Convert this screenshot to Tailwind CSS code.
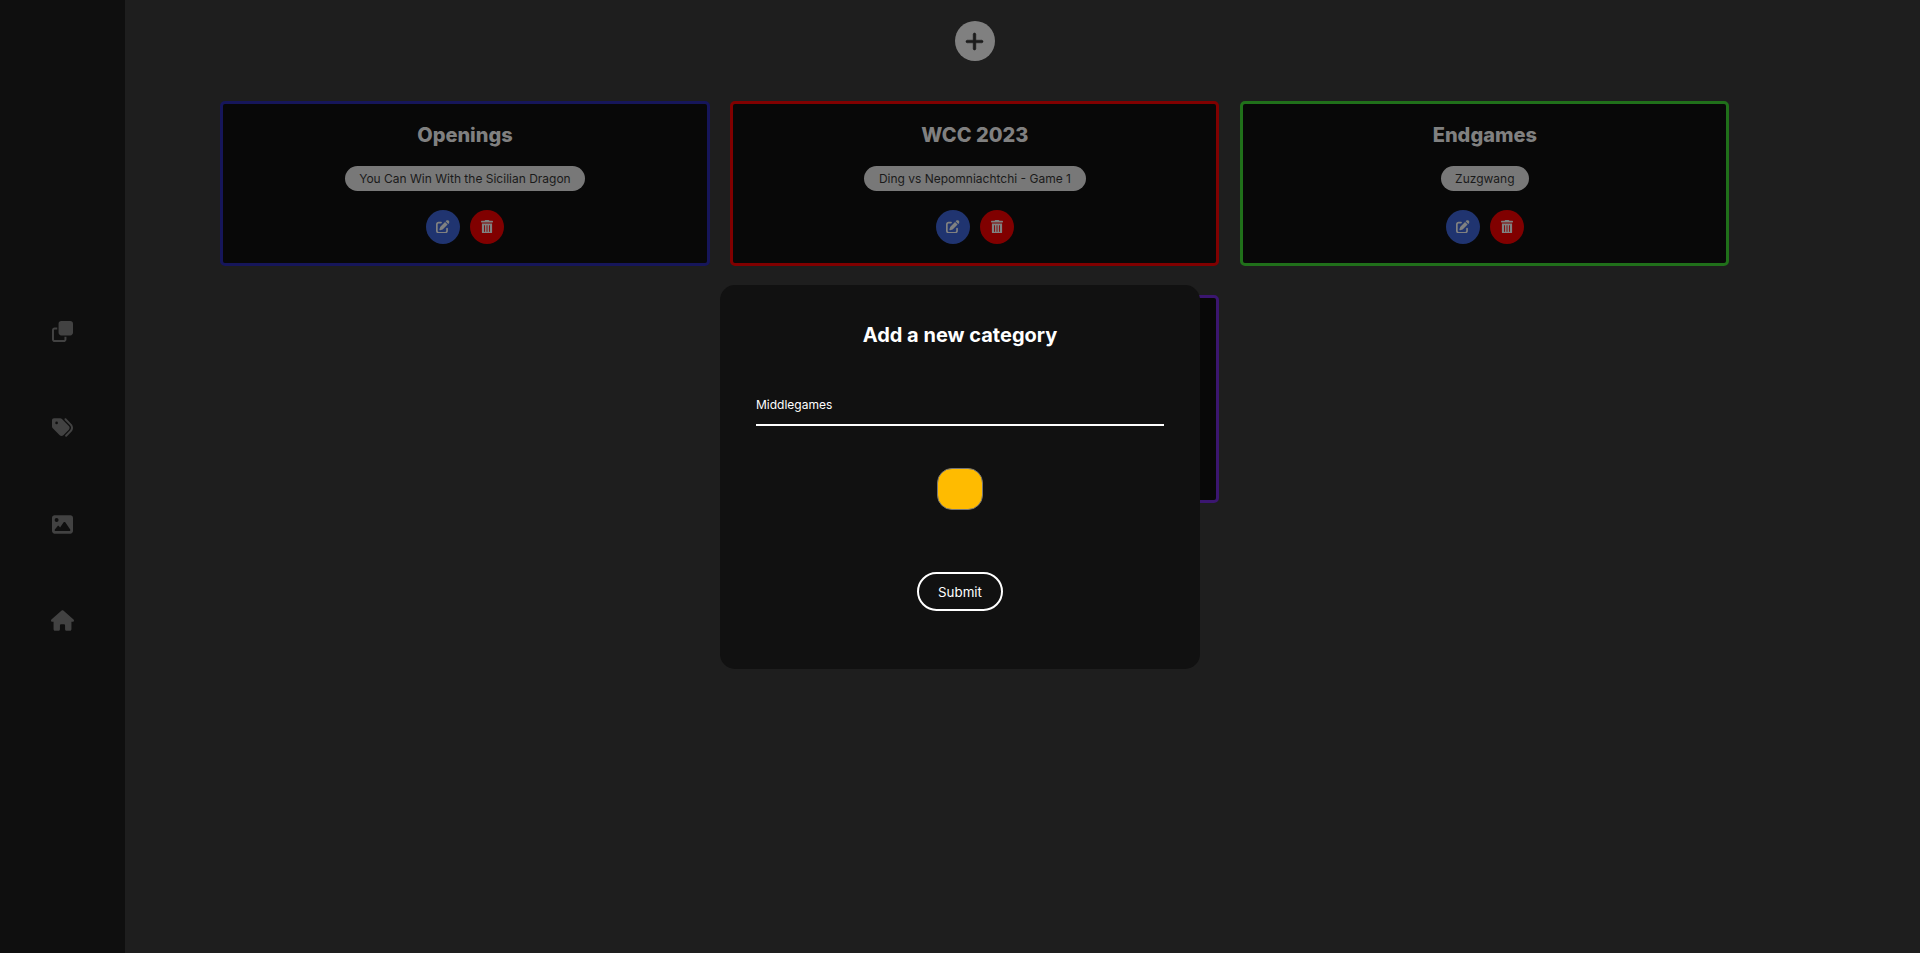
<!DOCTYPE html>
<html lang="en">
<head>
<meta charset="utf-8">
<title>Categories</title>
<script src="https://cdn.jsdelivr.net/npm/@tailwindcss/browser@4"></script>
</head>
<body class="h-[953px] overflow-hidden bg-[#1e1e1e] font-['Inter',sans-serif]">
<svg class="hidden">
  <symbol id="edit" viewBox="0 0 512 512"><path d="M471.6 21.7c-21.9-21.9-57.3-21.9-79.2 0L362.3 51.7l97.9 97.9 30.1-30.1c21.9-21.9 21.9-57.3 0-79.2L471.6 21.7zm-299.2 220c-6.1 6.1-10.8 13.6-13.5 21.9l-29.6 88.8c-2.9 8.6-.6 18.1 5.8 24.6s15.9 8.7 24.6 5.8l88.8-29.6c8.2-2.7 15.7-7.4 21.9-13.5L437.7 172.3 339.7 74.3 172.4 241.7zM96 64C43 64 0 107 0 160V416c0 53 43 96 96 96H352c53 0 96-43 96-96V320c0-17.7-14.3-32-32-32s-32 14.3-32 32v96c0 17.7-14.3 32-32 32H96c-17.7 0-32-14.3-32-32V160c0-17.7 14.3-32 32-32h96c17.7 0 32-14.3 32-32s-14.3-32-32-32H96z"/></symbol>
  <symbol id="trash" viewBox="0 0 448 512"><path d="M32 464a48 48 0 0 0 48 48h288a48 48 0 0 0 48-48V128H32zm272-256a16 16 0 0 1 32 0v224a16 16 0 0 1-32 0zm-96 0a16 16 0 0 1 32 0v224a16 16 0 0 1-32 0zm-96 0a16 16 0 0 1 32 0v224a16 16 0 0 1-32 0zM432 32H312l-9.4-18.7A24 24 0 0 0 281.1 0H166.8a23.72 23.72 0 0 0-21.4 13.3L136 32H16A16 16 0 0 0 0 48v32a16 16 0 0 0 16 16h416a16 16 0 0 0 16-16V48a16 16 0 0 0-16-16z"/></symbol>
</svg>
<div class="flex h-full">
  <nav class="flex w-[125px] shrink-0 flex-col items-center bg-[#0f0f0f] pt-[321px] text-[#424242]">
    <a class="flex h-[96px] items-start"><svg class="size-[21px]" viewBox="0 0 512 512" fill="currentColor"><path d="M0 224C0 188.7 28.65 160 64 160H128V208H64C55.16 208 48 215.2 48 224V448C48 456.8 55.16 464 64 464H288C296.8 464 304 456.8 304 448V384H352V448C352 483.3 323.3 512 288 512H64C28.65 512 0 483.3 0 448V224zM224 352C188.7 352 160 323.3 160 288V64C160 28.65 188.7 0 224 0H448C483.3 0 512 28.65 512 64V288C512 323.3 483.3 352 448 352H224z"/></svg></a>
    <a class="flex h-[97px] items-start"><svg class="size-[21px]" viewBox="0 0 512 512" fill="currentColor"><path d="M345 39.1L472.8 168.4c52.4 53 52.4 138.2 0 191.2L360.8 472.9c-9.3 9.4-24.5 9.5-33.9 .2s-9.5-24.5-.2-33.9L438.6 325.9c33.9-34.3 33.9-89.4 0-123.7L310.9 72.9c-9.3-9.4-9.2-24.6 .2-33.9s24.6-9.2 33.9 .2zM0 229.5V80C0 53.5 21.5 32 48 32H197.5c17 0 33.3 6.7 45.3 18.7l168 168c25 25 25 65.5 0 90.5L277.3 442.7c-25 25-65.5 25-90.5 0l-168-168C6.7 262.7 0 246.5 0 229.5zM144 144a32 32 0 1 0 -64 0 32 32 0 1 0 64 0z"/></svg></a>
    <a class="flex h-[96px] items-start"><svg class="size-[21px]" viewBox="0 0 512 512" fill="currentColor"><path d="M0 96C0 60.7 28.7 32 64 32H448c35.3 0 64 28.7 64 64V416c0 35.3-28.7 64-64 64H64c-35.3 0-64-28.7-64-64V96zM323.8 202.5c-4.5-6.6-11.9-10.5-19.8-10.5s-15.4 3.9-19.8 10.5l-87 127.6L170.7 297c-4.6-5.7-11.5-9-18.7-9s-14.2 3.3-18.7 9l-64 80c-5.8 7.2-6.9 17.1-2.9 25.4s12.4 13.6 21.6 13.6h96 32H424c8.9 0 17.1-4.9 21.2-12.8s3.6-17.4-1.4-24.7l-120-176zM112 192a48 48 0 1 0 0-96 48 48 0 1 0 0 96z"/></svg></a>
    <a class="flex items-start"><svg class="h-[21px] w-[23px]" viewBox="0 0 576 512" fill="currentColor"><path d="M575.8 255.5c0 18-15 32.1-32 32.1h-32l.7 160.2c0 2.7-.2 5.4-.5 8.1V472c0 22.1-17.9 40-40 40H456c-1.1 0-2.2 0-3.3-.1c-1.4 .1-2.8 .1-4.2 .1H416 392c-22.1 0-40-17.9-40-40V448 384c0-17.7-14.3-32-32-32H256c-17.7 0-32 14.3-32 32v64 24c0 22.1-17.9 40-40 40H160 128.1c-1.5 0-3-.1-4.5-.2c-1.2 .1-2.4 .2-3.6 .2H104c-22.1 0-40-17.9-40-40V360c0-.9 0-1.9 .1-2.8V287.6H32c-18 0-32-14-32-32.1c0-9 3-17 10-24L266.4 8c7-7 15-8 22-8s15 2 21 7L564.8 231.5c8 7 12 15 11 24z"/></svg></a>
  </nav>
  <main class="flex grow flex-col pt-[21px] pr-[190.6px] pl-[95.4px]">
    <button class="flex size-10 items-center justify-center self-center rounded-full bg-[#808080] text-[#1c1c1c]"><svg class="h-[21px] w-[19px]" viewBox="0 0 448 512" fill="currentColor" stroke="currentColor" stroke-width="14"><path d="M256 80c0-17.7-14.3-32-32-32s-32 14.3-32 32V224H48c-17.7 0-32 14.3-32 32s14.3 32 32 32H192V432c0 17.7 14.3 32 32 32s32-14.3 32-32V288H400c17.7 0 32-14.3 32-32s-14.3-32-32-32H256V80z"/></svg></button>
    <div class="mt-10 grid grid-cols-3 gap-x-[20.8px] gap-y-[29px] text-[#808080]">
      <section class="flex h-[165px] flex-col items-center rounded-[5px] border-3 border-[#16165a] bg-[#080808]">
        <h2 class="mt-[18px] text-xl leading-[26px] font-extrabold">Openings</h2>
        <span class="mt-[18px] flex h-[25px] items-center rounded-full bg-[#787878] px-[14.6px] pt-px text-xs text-[#1a1a1a]">You Can Win With the Sicilian Dragon</span>
        <div class="mt-[19px] flex gap-[9.5px]">
          <button class="flex size-[34px] items-center justify-center rounded-full bg-[#203470]"><svg class="mb-px size-[13.6px]" fill="currentColor"><use href="#edit"/></svg></button>
          <button class="flex size-[34px] items-center justify-center rounded-full bg-[#800000]"><svg class="mb-px h-[13.6px] w-3" fill="currentColor"><use href="#trash"/></svg></button>
        </div>
      </section>
      <section class="flex h-[165px] flex-col items-center rounded-[5px] border-3 border-[#800000] bg-[#080808]">
        <h2 class="mt-[18px] text-xl leading-[26px] font-extrabold">WCC 2023</h2>
        <span class="mt-[18px] flex h-[25px] items-center rounded-full bg-[#787878] px-[14.6px] pt-px text-xs text-[#1a1a1a]">Ding vs Nepomniachtchi - Game 1</span>
        <div class="mt-[19px] flex gap-[9.5px]">
          <button class="flex size-[34px] items-center justify-center rounded-full bg-[#203470]"><svg class="mb-px size-[13.6px]" fill="currentColor"><use href="#edit"/></svg></button>
          <button class="flex size-[34px] items-center justify-center rounded-full bg-[#800000]"><svg class="mb-px h-[13.6px] w-3" fill="currentColor"><use href="#trash"/></svg></button>
        </div>
      </section>
      <section class="flex h-[165px] flex-col items-center rounded-[5px] border-3 border-[#20701a] bg-[#080808]">
        <h2 class="mt-[18px] text-xl leading-[26px] font-extrabold">Endgames</h2>
        <span class="mt-[18px] flex h-[25px] items-center rounded-full bg-[#787878] px-[14.6px] pt-px text-xs text-[#1a1a1a]">Zuzgwang</span>
        <div class="mt-[19px] flex gap-[9.5px]">
          <button class="flex size-[34px] items-center justify-center rounded-full bg-[#203470]"><svg class="mb-px size-[13.6px]" fill="currentColor"><use href="#edit"/></svg></button>
          <button class="flex size-[34px] items-center justify-center rounded-full bg-[#800000]"><svg class="mb-px h-[13.6px] w-3" fill="currentColor"><use href="#trash"/></svg></button>
        </div>
      </section>
      <section class="col-start-2 h-[208px] rounded-[5px] border-3 border-[#3b1670] bg-[#080808]"></section>
    </div>
  </main>
</div>
<div class="absolute top-[285px] left-[720px] flex h-[384px] w-[480px] flex-col items-center rounded-[15px] bg-[#111111] px-9 text-white">
  <h2 class="mt-[37px] text-xl leading-[26px] font-bold">Add a new category</h2>
  <input class="mt-10 h-[38px] w-full border-b-2 border-white bg-transparent pb-[3px] text-xs outline-none" value="Middlegames">
  <span class="mt-[42px] h-[42px] w-[46px] rounded-[15px] border border-[#767676] bg-[#ffbb00]"></span>
  <button class="mt-[62px] h-[39px] w-[86px] rounded-full border-2 border-white pt-[2px] text-[13.33px]">Submit</button>
</div>
</body>
</html>
